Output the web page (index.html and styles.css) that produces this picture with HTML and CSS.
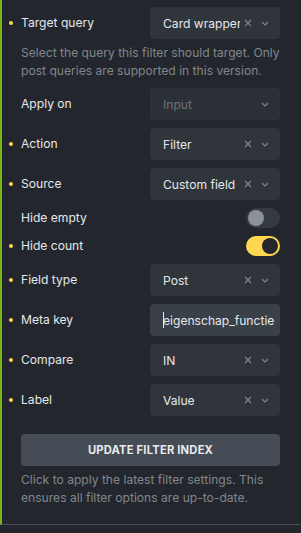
FILE: index.html
```html
<!DOCTYPE html>
<html lang="en">
<head>
  <meta charset="UTF-8" />
  <title>Filter settings</title>
  <link rel="stylesheet" href="styles.css">
</head>
<body>

<div class="panel">

  <div class="control">
    <div class="row set">
      <label class="label">Target query</label>
      <div class="select">
        <span class="value">Card wrapper</span>
        <span class="clear">
          <svg width="8" height="8" viewBox="0 0 8 8"><path d="M1 1L7 7M7 1L1 7" /></svg>
        </span>
        <span class="caret">
          <svg width="8" height="5" viewBox="0 0 8 5"><path d="M1 1L4 4L7 1" /></svg>
        </span>
      </div>
    </div>
    <p class="description">Select the query this filter should target. Only post queries are supported in this version.</p>
  </div>

  <div class="row">
    <label class="label">Apply on</label>
    <div class="select disabled">
      <span class="value">Input</span>
      <span class="caret">
        <svg width="8" height="5" viewBox="0 0 8 5"><path d="M1 1L4 4L7 1" /></svg>
      </span>
    </div>
  </div>

  <div class="row set">
    <label class="label">Action</label>
    <div class="select">
      <span class="value">Filter</span>
      <span class="clear">
        <svg width="8" height="8" viewBox="0 0 8 8"><path d="M1 1L7 7M7 1L1 7" /></svg>
      </span>
      <span class="caret">
        <svg width="8" height="5" viewBox="0 0 8 5"><path d="M1 1L4 4L7 1" /></svg>
      </span>
    </div>
  </div>

  <div class="row set">
    <label class="label">Source</label>
    <div class="select">
      <span class="value">Custom field</span>
      <span class="clear">
        <svg width="8" height="8" viewBox="0 0 8 8"><path d="M1 1L7 7M7 1L1 7" /></svg>
      </span>
      <span class="caret">
        <svg width="8" height="5" viewBox="0 0 8 5"><path d="M1 1L4 4L7 1" /></svg>
      </span>
    </div>
  </div>

  <div class="row small">
    <label class="label">Hide empty</label>
    <span class="toggle"><span class="knob"></span></span>
  </div>

  <div class="row small set">
    <label class="label">Hide count</label>
    <span class="toggle on"><span class="knob"></span></span>
  </div>

  <div class="row set">
    <label class="label">Field type</label>
    <div class="select">
      <span class="value">Post</span>
      <span class="clear">
        <svg width="8" height="8" viewBox="0 0 8 8"><path d="M1 1L7 7M7 1L1 7" /></svg>
      </span>
      <span class="caret">
        <svg width="8" height="5" viewBox="0 0 8 5"><path d="M1 1L4 4L7 1" /></svg>
      </span>
    </div>
  </div>

  <div class="row set">
    <label class="label">Meta key</label>
    <div class="input"><span class="cursor"></span>eigenschap_functie</div>
  </div>

  <div class="row set">
    <label class="label">Compare</label>
    <div class="select">
      <span class="value">IN</span>
      <span class="clear">
        <svg width="8" height="8" viewBox="0 0 8 8"><path d="M1 1L7 7M7 1L1 7" /></svg>
      </span>
      <span class="caret">
        <svg width="8" height="5" viewBox="0 0 8 5"><path d="M1 1L4 4L7 1" /></svg>
      </span>
    </div>
  </div>

  <div class="row set">
    <label class="label">Label</label>
    <div class="select">
      <span class="value">Value</span>
      <span class="clear">
        <svg width="8" height="8" viewBox="0 0 8 8"><path d="M1 1L7 7M7 1L1 7" /></svg>
      </span>
      <span class="caret">
        <svg width="8" height="5" viewBox="0 0 8 5"><path d="M1 1L4 4L7 1" /></svg>
      </span>
    </div>
  </div>

  <div class="action">
    <button class="button">Update filter index</button>
    <p class="description">Click to apply the latest filter settings. This ensures all filter options are up-to-date.</p>
  </div>

</div>

</body>
</html>
```

FILE: styles.css
```css
html, body {
  margin: 0;
  height: 100%;
  background: #23272d;
}

body {
  font-family: Inter, "Noto Sans", sans-serif;
  font-size: 12.1px;
  color: #e4e7eb;
}

.panel {
  box-sizing: border-box;
  height: 525px;
  border-left: 2px solid #7ab51d;
  border-right: 1px solid #1e2126;
  border-bottom: 1px solid #4a4f57;
  padding: 7px 20px 0 7px;
  display: flex;
  flex-direction: column;
  gap: 8px;
}

.row {
  display: flex;
  align-items: center;
  height: 32px;
}

.row.small {
  height: 20px;
}

.row::before {
  content: "";
  width: 4px;
  height: 4px;
  border-radius: 50%;
  margin-right: 8px;
  background: #ffd64f;
  visibility: hidden;
  flex-shrink: 0;
}

.row.set::before {
  visibility: visible;
}

.label {
  flex: 1;
  line-height: 16px;
}

.select,
.input {
  box-sizing: border-box;
  width: 130px;
  flex-shrink: 0;
  height: 32px;
  border-radius: 4px;
  background: #30353c;
  display: flex;
  align-items: center;
  padding: 0 11px 0 13px;
}

.select .value {
  flex: 1;
  white-space: nowrap;
  overflow: hidden;
}

.select.disabled {
  background: #2c3037;
}

.select.disabled .value {
  color: #6c727a;
}

.clear,
.caret {
  display: flex;
  align-items: center;
}

.clear { margin-left: 4px; }
.caret { margin-left: 9px; }

.select svg path {
  fill: none;
  stroke: #7e848c;
  stroke-width: 1.2;
}

.input {
  background: #3a4048;
  padding: 0 0 0 13px;
  overflow: hidden;
  white-space: nowrap;
  color: #e6e8eb;
}

.cursor {
  display: inline-block;
  width: 1px;
  height: 16px;
  margin-right: -1px;
  background: #e6e8eb;
}

.toggle {
  box-sizing: border-box;
  width: 34px;
  height: 20px;
  border-radius: 10px;
  background: #353a42;
  padding: 2px;
  display: flex;
}

.knob {
  width: 16px;
  height: 16px;
  border-radius: 50%;
  background: #8a919b;
}

.toggle.on {
  background: #ffd64f;
  justify-content: flex-end;
}

.toggle.on .knob {
  background: #23272d;
}

.description {
  margin: 5px 0 0 12px;
  line-height: 18px;
  color: #80868e;
}

.action {
  margin-top: 10px;
  padding-left: 12px;
}

.action .description {
  margin-left: 0;
}

.button {
  width: 100%;
  height: 32px;
  border: none;
  border-radius: 4px;
  background: #454c55;
  color: #e8eaed;
  font-family: Inter, "Noto Sans", sans-serif;
  font-size: 11.2px;
  font-weight: 700;
  text-transform: uppercase;
  letter-spacing: 0.2px;
  cursor: pointer;
}
```
